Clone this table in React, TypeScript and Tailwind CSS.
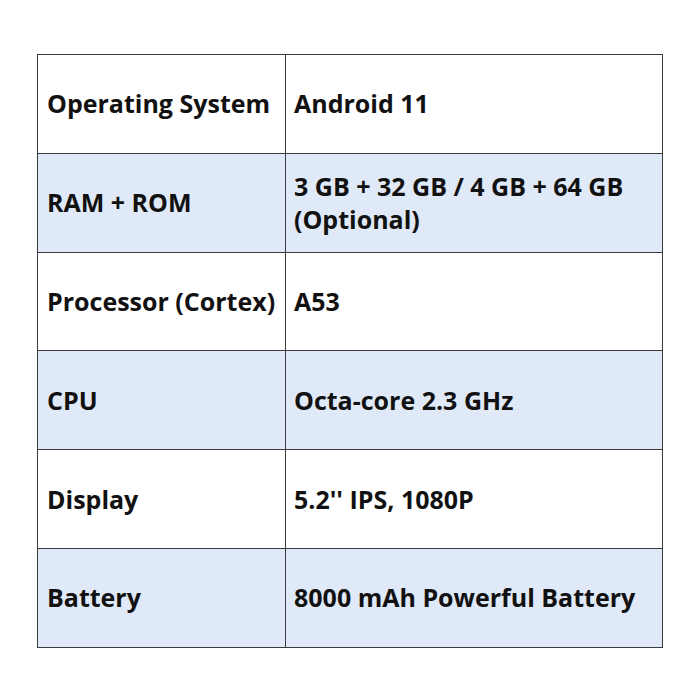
import React from 'react';

const rows: { label: string; value: string; shaded: boolean }[] = [
  { label: 'Operating System', value: 'Android 11', shaded: false },
  { label: 'RAM + ROM', value: '3 GB + 32 GB / 4 GB + 64 GB (Optional)', shaded: true },
  { label: 'Processor (Cortex)', value: 'A53', shaded: false },
  { label: 'CPU', value: 'Octa-core 2.3 GHz', shaded: true },
  { label: 'Display', value: '5.2\'\' IPS, 1080P', shaded: false },
  { label: 'Battery', value: '8000 mAh Powerful Battery', shaded: true },
];

export default function App() {
  return (
    <div className="w-[700px] h-[700px] bg-white pt-[54px] pl-[37px] font-['Open_Sans',sans-serif]">
      <table className="w-[626px] border-collapse border border-[#3a3a3a] text-[25px] font-bold text-[#111] leading-[33px]">
        <tbody>
          {rows.map((r) => (
            <tr key={r.label} className={`h-[98.8px] ${r.shaded ? 'bg-[#dfe9f7]' : 'bg-white'}`}>
              <td className="w-[248px] border border-[#3a3a3a] pl-[9px] pr-1 align-middle whitespace-nowrap">{r.label}</td>
              <td className="border border-[#3a3a3a] pl-[8px] pr-3 align-middle">{r.value}</td>
            </tr>
          ))}
        </tbody>
      </table>
    </div>
  );
}
